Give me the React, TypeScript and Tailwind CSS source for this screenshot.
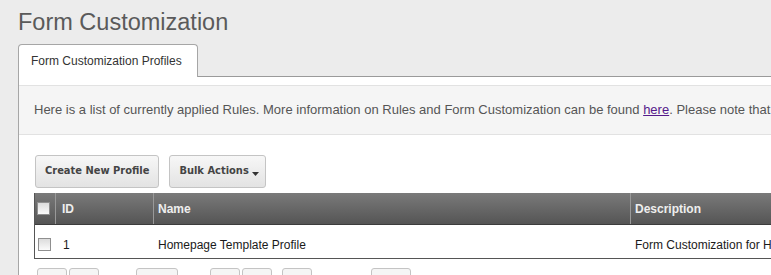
import React from 'react';

const pageBoxes = [
  { w: 'w-[30px]', ml: 'ml-0' },
  { w: 'w-[30px]', ml: 'ml-[2px]' },
  { w: 'w-[42px]', ml: 'ml-[37px]' },
  { w: 'w-[30px]', ml: 'ml-[32px]' },
  { w: 'w-[30px]', ml: 'ml-[2px]' },
  { w: 'w-[30px]', ml: 'ml-[10px]' },
  { w: 'w-[40px]', ml: 'ml-[59px]' },
];

const Checkbox = () => (
  <span className="block w-[13px] h-[13px] border border-[#8f8f8f] bg-gradient-to-b from-[#dcdcdc] to-[#fbfbfb]" />
);

export default function App() {
  return (
    <div className="w-[771px] h-[275px] overflow-hidden bg-[#ececec] font-['Liberation_Sans',Arial,sans-serif]">
      <h1 className="pl-[18px] pt-[7px] h-[44px] text-[23.5px] leading-[30px] text-[#5a5a5a]">
        Form Customization
      </h1>

      <div className="flex pl-[18px] h-[33px]">
        <div className="w-[180px] h-[33px] bg-white border border-b-0 border-[#a6a6a6] rounded-t-[4px] pl-[12px] text-[12px] leading-[33px] text-[#333]">
          Form Customization Profiles
        </div>
        <div className="flex-1 border-b border-[#9a9a9a]" />
      </div>

      <div className="ml-[18px] border-l border-[#a6a6a6] bg-white h-[200px] pt-[8px]">
        <div className="h-[50px] bg-[#f5f5f5] border-y border-[#e2e2e2] pl-[15px] text-[13px] leading-[48px] text-[#555] whitespace-nowrap overflow-hidden">
          Here is a list of currently applied Rules. More information on Rules and Form Customization can be found{' '}
          <a className="text-[#551a8b] underline">here</a>. Please note that
        </div>

        <div className="flex gap-[10px] pl-[16px] pt-[20px] h-[58px]">
          <button className="h-[33px] px-[9px] border border-[#c4c4c4] rounded-[3px] bg-gradient-to-b from-[#f7f7f7] to-[#e3e3e3] font-['DejaVu_Sans_Condensed','DejaVu_Sans',sans-serif] font-bold text-[11px] text-[#444]">
            Create New Profile
          </button>
          <button className="h-[33px] pl-[9px] pr-[6px] border border-[#c4c4c4] rounded-[3px] bg-gradient-to-b from-[#f7f7f7] to-[#e3e3e3] font-['DejaVu_Sans_Condensed','DejaVu_Sans',sans-serif] font-bold text-[11px] text-[#444] flex items-center">
            Bulk Actions
            <svg width="7" height="4" viewBox="0 0 7 4" className="ml-[3px] mt-[4px]">
              <path d="M0 0h7L3.5 4z" fill="#333" />
            </svg>
          </button>
        </div>

        <div className="ml-[15px] border-l border-b border-[#555] text-[12px]">
          <div className="flex h-[32px] bg-gradient-to-b from-[#7a7a7a] to-[#555] border-b border-[#3c3c3c] text-[#eee] font-bold items-center">
            <div className="w-[21px] shrink-0 h-full flex items-center pl-[2px] border-r border-[#999]">
              <Checkbox />
            </div>
            <div className="w-[98px] shrink-0 h-full pl-[6px] leading-[32px] border-r border-[#999]">ID</div>
            <div className="w-[477px] shrink-0 h-full pl-[4px] leading-[32px] border-r border-[#999]">Name</div>
            <div className="flex-1 h-full pl-[4px] leading-[32px]">Description</div>
          </div>
          <div className="flex h-[33px] pt-[6px] items-center text-[#1a1a1a] whitespace-nowrap overflow-hidden">
            <div className="w-[21px] shrink-0 flex pl-[3px]">
              <Checkbox />
            </div>
            <div className="w-[98px] shrink-0 pl-[7px]">1</div>
            <div className="w-[477px] shrink-0 pl-[4px]">Homepage Template Profile</div>
            <div className="flex-1 pl-[4px]">Form Customization for H</div>
          </div>
        </div>

        <div className="flex pl-[18px] pt-[9px]">
          {pageBoxes.map((b, i) => (
            <span key={i} className={`${b.w} ${b.ml} h-[24px] border border-[#c4c4c4] rounded-[3px] bg-[#f5f5f5]`} />
          ))}
        </div>
      </div>
    </div>
  );
}
